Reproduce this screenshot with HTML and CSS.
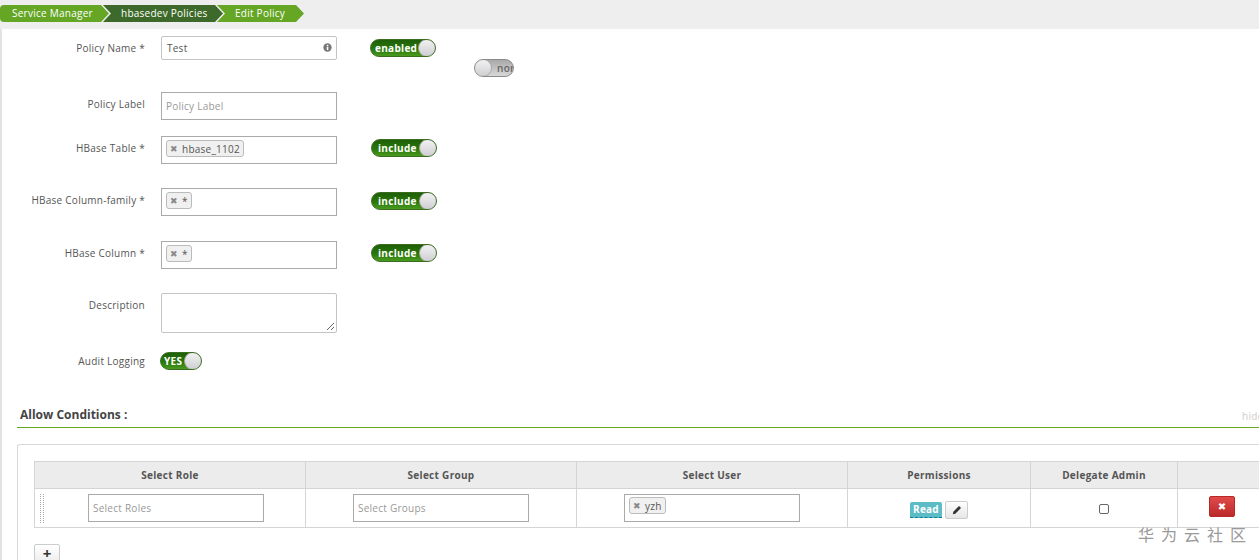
FILE: index.html
```html
<!DOCTYPE html>
<html lang="en">
<head>
<meta charset="utf-8">
<title>Edit Policy</title>
<link rel="stylesheet" href="styles.css">
</head>
<body>
<nav class="crumbs">
  <span class="crumb first">Service Manager</span>
  <span class="crumb dark">hbasedev Policies</span>
  <span class="crumb last">Edit Policy</span>
</nav>
<main class="page">
  <div class="toggle off floating"><span class="knob"></span><span class="toggle-text">nor</span></div>
  <form class="form">
    <div class="row row-name">
      <label class="label">Policy Name *</label>
      <div class="field rounded h24"><span class="value">Test</span>
        <svg class="info" viewBox="0 0 10 10" width="9" height="9"><circle cx="5" cy="5" r="4.6" fill="#777"/><rect x="4.2" y="4.2" width="1.7" height="3.6" fill="#fff"/><rect x="4.2" y="2" width="1.7" height="1.5" fill="#fff"/></svg>
      </div>
      <div class="toggle on t-enabled"><span class="toggle-text">enabled</span><span class="knob"></span></div>
    </div>
    <div class="row row-label">
      <label class="label">Policy Label</label>
      <div class="field h28"><span class="placeholder">Policy Label</span></div>
    </div>
    <div class="row row-table">
      <label class="label">HBase Table *</label>
      <div class="field h28 top"><span class="tag"><i class="x">✖</i>hbase_1102</span></div>
      <div class="toggle on t-include"><span class="toggle-text">include</span><span class="knob"></span></div>
    </div>
    <div class="row row-family">
      <label class="label">HBase Column-family *</label>
      <div class="field h28 top"><span class="tag"><i class="x">✖</i>*</span></div>
      <div class="toggle on t-include t-low"><span class="toggle-text">include</span><span class="knob"></span></div>
    </div>
    <div class="row row-column">
      <label class="label">HBase Column *</label>
      <div class="field h28 top"><span class="tag"><i class="x">✖</i>*</span></div>
      <div class="toggle on t-include"><span class="toggle-text">include</span><span class="knob"></span></div>
    </div>
    <div class="row row-desc">
      <label class="label">Description</label>
      <div class="field rounded h40">
        <svg class="grip" viewBox="0 0 9 9" width="9" height="9"><path d="M1 8 8 1M5 8 8 5" stroke="#666" stroke-width="1" fill="none"/></svg>
      </div>
    </div>
    <div class="row row-audit">
      <label class="label">Audit Logging</label>
      <div class="toggle on t-yes"><span class="toggle-text">YES</span><span class="knob"></span></div>
    </div>
  </form>

  <section class="conditions">
    <header class="cond-head">
      <h2 class="cond-title">Allow Conditions :</h2>
      <span class="hide-link">hide</span>
    </header>
    <div class="card">
      <table class="grid">
        <thead>
          <tr>
            <th class="c1">Select Role</th>
            <th class="c2">Select Group</th>
            <th class="c3">Select User</th>
            <th class="c4">Permissions</th>
            <th class="c5">Delegate Admin</th>
            <th class="c6"></th>
          </tr>
        </thead>
        <tbody>
          <tr>
            <td class="cell-role"><span class="drag"></span><div class="field cell-field"><span class="placeholder">Select Roles</span></div></td>
            <td class="cell-group"><div class="field cell-field"><span class="placeholder">Select Groups</span></div></td>
            <td class="cell-user"><div class="field cell-field top"><span class="tag"><i class="x">✖</i>yzh</span></div></td>
            <td class="cell-perm"><span class="perm">Read</span><button type="button" class="btn-edit">
              <svg viewBox="0 0 12 12" width="10" height="10"><path d="M1 11 1.6 8 7.8 1.8a1 1 0 0 1 1.4 0l1 1a1 1 0 0 1 0 1.4L4 10.4Z" fill="#333"/></svg>
            </button></td>
            <td class="cell-admin"><span class="check"></span></td>
            <td class="cell-del"><button type="button" class="btn-del">✖</button></td>
          </tr>
        </tbody>
      </table>
      <button type="button" class="btn-add">+</button>
    </div>
  </section>
</main>
<div class="watermark">华为云社区</div>
</body>
</html>
```

FILE: styles.css
```css
* { box-sizing: border-box; }
html, body { height: 560px; overflow: hidden; }
body {
  margin: 0;
  background: #fff;
  color: #555;
  font-family: "Open Sans", "Liberation Sans", sans-serif;
  font-size: 10px;
  letter-spacing: 0.25px;
}
.crumbs {
  height: 29px;
  background: #eeeeee;
  display: flex;
  padding-top: 5px;
  align-items: flex-start;
}
.crumb {
  height: 17px;
  line-height: 17px;
  color: #fff;
  background: #65a625;
  font-size: 10px;
  padding-left: 18px;
  margin-left: -6px;
  white-space: nowrap;
  clip-path: polygon(0 0, calc(100% - 8px) 0, 100% 50%, calc(100% - 8px) 100%, 0 100%, 8px 50%);
}
.crumb.first {
  padding-left: 12px;
  margin-left: 0;
  width: 109px;
  border-radius: 4px 0 0 4px;
  clip-path: polygon(0 0, calc(100% - 8px) 0, 100% 50%, calc(100% - 8px) 100%, 0 100%);
}
.crumb.dark { background: #3d6a2a; width: 120px; }
.crumb.last { width: 87px; }

.page {
  position: relative;
  border-left: 2px solid #e2e2e2;
  height: 531px;
}
.form { padding: 7px 0 0 159px; }
.row {
  display: flex;
  align-items: flex-start;
  position: relative;
}
.label {
  position: absolute;
  right: calc(100% + 16px);
  white-space: nowrap;
  top: 5px;
  color: #555;
  font-size: 10px;
}
.row-label { margin-top: 32px; }
.row-table { margin-top: 16px; }
.row-family { margin-top: 24px; }
.row-column { margin-top: 25px; }
.row-desc { margin-top: 24px; }
.row-audit { margin-top: 19px; }
.row-audit .label { top: 2px; }
.field {
  width: 176px;
  border: 1px solid #aaa;
  background: #fff;
  display: flex;
  align-items: center;
  padding-left: 4px;
  position: relative;
  flex: none;
}
.field.rounded { border-radius: 2px; border-color: #c4c4c4; }
.field.top { align-items: flex-start; padding-top: 3px; padding-left: 4px; }
.h24 { height: 24px; }
.h28 { height: 28px; }
.h40 { height: 40px; }
.value { color: #555; margin-left: 1px; }
.placeholder { color: #999; }
.info { position: absolute; right: 4px; top: 6px; }
.grip { position: absolute; right: 1px; bottom: 1px; }
.tag {
  display: inline-flex;
  align-items: center;
  height: 17px;
  padding: 0 3px 0 3px;
  border: 1px solid #bbb;
  border-radius: 3px;
  background: #f0f0f0;
  color: #555;
}
.x {
  font-style: normal;
  color: #888;
  font-size: 9px;
  margin-right: 4px;
  width: 8px;
  text-align: center;
  font-family: "DejaVu Sans", sans-serif;
}

.toggle {
  display: flex;
  align-items: center;
  height: 18px;
  border-radius: 9px;
  overflow: hidden;
  position: relative;
  flex: none;
  font-weight: 700;
  font-size: 10px;
  letter-spacing: 0.3px;
  border: 1px solid #8a8a8a;
}
.toggle.on {
  color: #fff;
  background: linear-gradient(#1f5f08, #2b7a0b 60%, #4a9a20);
  border-color: #3b6d1f;
  justify-content: space-between;
}
.toggle.off {
  color: #666;
  background: linear-gradient(#a9a9a9, #d8d8d8);
}
.knob {
  width: 18px;
  height: 18px;
  border-radius: 50%;
  margin: 0 -1px;
  background: linear-gradient(#f2f2f2, #cfcfd3);
  border: 1px solid #aaa;
  flex: none;
}
.t-enabled { width: 66px; margin-left: 33px; margin-top: 3px; padding-left: 4px; }
.t-include { width: 66px; margin-left: 34px; margin-top: 3px; padding-left: 6px; }
.t-low { margin-top: 4px; }
.t-yes { width: 42px; margin-left: -1px; padding-left: 3px; height: 18px; }
.floating {
  position: absolute;
  left: 472px;
  top: 30px;
  width: 40px;
  gap: 6px;
  font-weight: 600;
}
.conditions { margin-top: 35px; padding-left: 15px; }
.cond-head {
  height: 23px;
  border-bottom: 1px solid #6aa51f;
  display: flex;
  justify-content: space-between;
  align-items: center;
  padding: 0 0 4px 3px;
}
.cond-title { margin: 0; font-size: 12px; font-weight: 700; color: #444; letter-spacing: 0; }
.hide-link { color: #ccc; font-size: 10px; width: 17px; overflow: hidden; margin-top: 4px; }
.card {
  margin-top: 16px;
  border: 1px solid #d8d8d8;
  border-right: 0;
  border-radius: 3px 0 0 0;
  padding: 16px 0 0 16px;
  height: 200px;
}
.grid {
  border-collapse: collapse;
  table-layout: fixed;
  width: 1225px;
  border: 1px solid #d5d5d5;
}
.grid th {
  height: 27px;
  background: #ececec;
  color: #555;
  font-size: 10px;
  font-weight: 700;
  letter-spacing: 0.3px;
  border: 1px solid #d5d5d5;
  border-width: 0 1px 1px 0;
  padding: 0;
}
.grid td {
  height: 39px;
  border-right: 1px solid #d5d5d5;
  padding: 0;
  vertical-align: middle;
}
.c1 { width: 271px; }
.c2 { width: 271px; }
.c3 { width: 271px; }
.c4 { width: 183px; }
.c5 { width: 147px; }
.c6 { width: 82px; }
.cell-role { position: relative; padding-left: 53px !important; }
.cell-group { padding-left: 47px !important; }
.cell-user { padding-left: 47px !important; }
.cell-field { height: 28px; }
.field.cell-field.top { padding: 2px 0 0 4px; }
.drag {
  position: absolute;
  left: 5px;
  top: 5px;
  width: 4px;
  height: 29px;
  border-left: 1px dotted #aaa;
  border-right: 1px dotted #aaa;
}
.cell-perm { text-align: center; padding-top: 4px !important; }
.perm {
  display: inline-block;
  height: 16px;
  line-height: 15px;
  width: 32px;
  background: #5bbcc6;
  color: #fff;
  font-weight: 700;
  font-size: 10px;
  text-align: center;
  border-radius: 2px 2px 0 0;
  border-bottom: 1px dashed #0a7c96;
  vertical-align: middle;
}
.btn-edit {
  width: 23px;
  height: 18px;
  margin-left: 3px;
  padding: 0;
  border: 1px solid #ccc;
  border-radius: 2px;
  background: linear-gradient(#fff, #e6e6e6);
  vertical-align: middle;
  display: inline-flex;
  align-items: center;
  justify-content: center;
}
.cell-admin { text-align: center; }
.check {
  display: inline-block;
  width: 10px;
  height: 10px;
  border: 1px solid #666;
  border-radius: 2px;
  vertical-align: middle;
}
.cell-del { padding-left: 31px !important; }
.btn-del {
  display: block;
  width: 26px;
  height: 21px;
  margin-top: -3px;
  padding: 0;
  border: 1px solid #b82a2a;
  border-radius: 2px;
  background: linear-gradient(#e04a4a, #bb2a2a);
  color: #fff;
  font-size: 10px;
  line-height: 1;
  text-align: center;
  font-family: "DejaVu Sans", sans-serif;
}
.btn-add {
  display: block;
  margin-top: 16px;
  width: 26px;
  height: 26px;
  padding: 0 0 8px;
  border: 1px solid #ccc;
  border-radius: 2px;
  background: linear-gradient(#fff, #e6e6e6);
  color: #333;
  font-size: 15px;
  font-weight: 700;
  line-height: 16px;
  font-family: "Open Sans", sans-serif;
}
.watermark {
  position: absolute;
  left: 1138px;
  top: 523px;
  color: #9a9a9a;
  font-family: "Noto Sans CJK SC", sans-serif;
  font-size: 16px;
  letter-spacing: 7px;
  line-height: 22px;
  white-space: nowrap;
}
```
